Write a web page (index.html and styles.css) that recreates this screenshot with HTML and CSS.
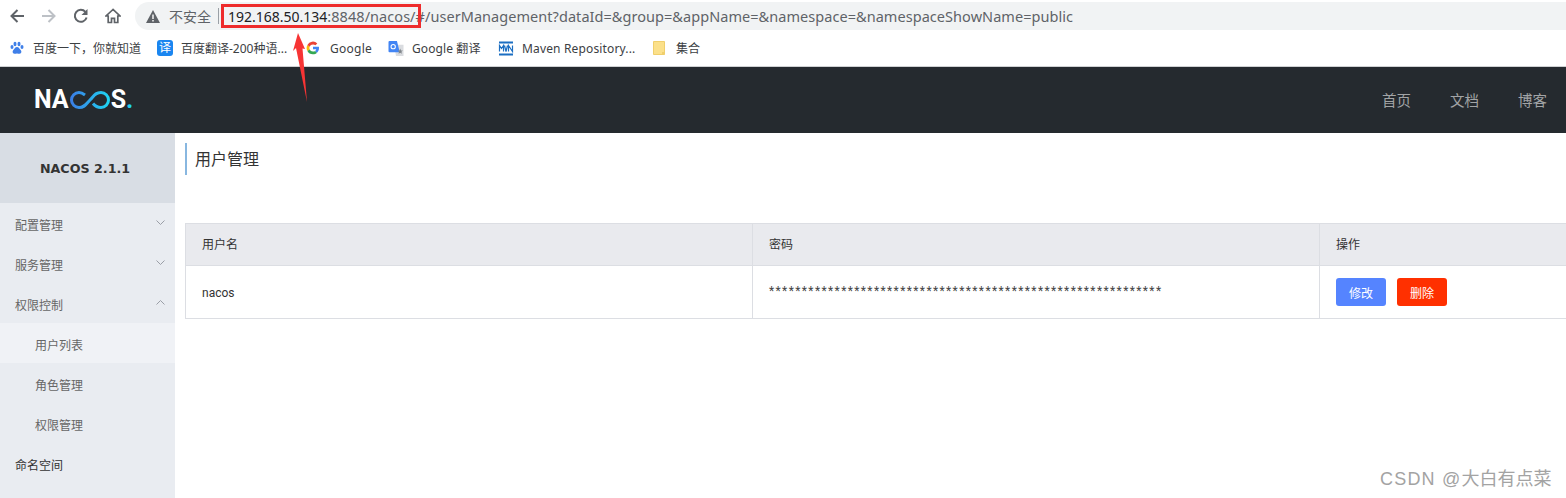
FILE: index.html
```html
<!DOCTYPE html>
<html lang="zh-CN">
<head>
<meta charset="utf-8">
<title>Nacos</title>
<link rel="stylesheet" href="styles.css">
</head>
<body>
<div class="page">
  <div class="toolbar">
    <div class="navs">
      <svg class="nav-icon" viewBox="0 0 16 16"><path d="M15 8H2.500M8.500 2L2.500 8l6 6" class="stroke dark"/></svg>
      <svg class="nav-icon" viewBox="0 0 16 16"><path d="M1 8h12.500M7.500 2l6 6-6 6" class="stroke light"/></svg>
      <svg class="nav-icon" viewBox="0 0 16 16"><path d="M13.600 9.500A6 6 0 1 1 12.400 3.900" class="stroke dark"/><path d="M14.500 1v6h-6z" class="fill-dark"/></svg>
      <svg class="nav-icon" viewBox="0 0 16 16"><path d="M8 1.500L1 8h2.200v6.500h3.300v-4.200h3v4.200h3.300V8H15z" class="stroke dark thin"/></svg>
    </div>
    <div class="address">
      <svg class="warn" viewBox="0 0 14 13"><path d="M7 0l7 13H0z" class="fill-dark"/><path d="M6.300 4.500h1.400v4.500H6.300zM6.300 10h1.400v1.500H6.300z" class="fill-white"/></svg>
      <span class="insecure">不安全</span>
      <span class="divider"></span>
      <span class="url"><span class="host">192.168.50.134</span><span class="port">:8848/nacos/#/userManagement?dataId=&amp;group=&amp;appName=&amp;namespace=&amp;namespaceShowName=public</span></span>
    </div>
  </div>
  <div class="bookmarks">
    <div class="bm bm-baidu">
      <svg class="bm-icon" viewBox="0 0 14 14"><ellipse cx="2" cy="6" rx="1.500" ry="2" class="fill-blue"/><ellipse cx="5" cy="3" rx="1.500" ry="2.200" class="fill-blue"/><ellipse cx="9" cy="3" rx="1.500" ry="2.200" class="fill-blue"/><ellipse cx="12" cy="6" rx="1.500" ry="2" class="fill-blue"/><path d="M7 6c2 0 2.500 2 4 3.500 1 1.500 0 3.500-2 3.300-1-.1-1.300-.4-2-.4s-1 .3-2 .4C3 13 2 11 3 9.500 4.500 8 5 6 7 6z" class="fill-blue"/></svg>
      <span>百度一下，你就知道</span>
    </div>
    <div class="bm bm-fanyi">
      <span class="fanyi-icon">译</span>
      <span>百度翻译-200种语...</span>
    </div>
    <div class="bm bm-google">
      <svg class="bm-icon" viewBox="0 0 14 14"><path d="M7 10.600a3.600 3.600 0 0 1-3.400-2.400L1.400 10A6.200 6.200 0 0 0 7 13.300c1.600 0 3-.5 4-1.500L9.100 10c-.5.400-1.200.6-2.100.6z" fill="#34a853"/><path d="M3.600 8.200a3.700 3.700 0 0 1 0-2.400L1.400 4a6.300 6.300 0 0 0 0 6z" fill="#fbbc05"/><path d="M7 3.400c1 0 1.800.3 2.400.9l1.900-1.900A6.200 6.200 0 0 0 1.400 4l2.200 1.800A3.600 3.600 0 0 1 7 3.400z" fill="#ea4335"/><path d="M13 7c0-.4 0-.8-.2-1.200H7v2.500h3.300c-.2.700-.6 1.300-1.200 1.700l1.900 1.800C12.200 10.700 13 9 13 7z" fill="#4285f4"/></svg>
      <span>Google</span>
    </div>
    <div class="bm bm-translate">
      <svg class="bm-icon wide" viewBox="0 0 16 16"><path d="M6 4h10v12H8z" fill="#dadce0"/><path d="M1 0h8l3 12H1a1 1 0 0 1-1-1V1a1 1 0 0 1 1-1z" fill="#4285f4"/><circle cx="5" cy="6" r="2.300" fill="none" stroke="#fff" stroke-width="1.100"/><path d="M12.500 8l.8 2 2 .2-1.500 1.300.5 2-1.800-1-1.800 1 .5-2-1.500-1.300 2-.2z" fill="#80868b"/></svg>
      <span>Google 翻译</span>
    </div>
    <div class="bm bm-maven">
      <svg class="bm-icon wide" viewBox="0 0 16 14"><path d="M1 0h14v2H1zM1 12h14v2H1z" fill="#1b6ec2"/><path d="M1.500 10V4l2 3 2-3v6M6.500 4l1.500 6 1.500-6M10.500 10V4l4 6V4" fill="none" stroke="#1b6ec2" stroke-width="1.200"/></svg>
      <span>Maven Repository...</span>
    </div>
    <div class="bm bm-folder">
      <svg class="folder" viewBox="0 0 12 14"><path d="M.5.500h11v13H.5z" fill="#fbe08a" stroke="#f0cf6c"/><path d="M9 11h2.500v2.500H9z" fill="#f0cf6c"/></svg>
      <span>集合</span>
    </div>
  </div>

  <header class="topbar">
    <div class="logo">
      <span>NA</span>
      <svg class="logo-mark" viewBox="0 0 42 18"><defs><linearGradient id="lg" x1="0" x2="1" y1="0" y2="0"><stop offset="0" stop-color="#3a7fe6"/><stop offset="1" stop-color="#1fd3f2"/></linearGradient></defs><path d="M16 4C14 2.500 12 1.500 10 1.500a7.500 7.500 0 0 0 0 15C16 16.500 17 13 21 9S26 1.500 32 1.500a7.500 7.500 0 0 1 0 15c-4 0-6-1.500-8-4" fill="none" stroke="url(#lg)" stroke-width="3"/></svg>
      <span>S</span><span class="logo-dot">.</span>
    </div>
    <nav class="topnav">
      <span>首页</span>
      <span>文档</span>
      <span>博客</span>
    </nav>
  </header>

  <div class="content">
    <aside class="sidebar">
      <div class="brand">NACOS 2.1.1</div>
      <div class="item item-parent"><span>配置管理</span><svg class="chev" viewBox="0 0 9 5"><path d="M.5.500l4 4 4-4"/></svg></div>
      <div class="item item-parent"><span>服务管理</span><svg class="chev" viewBox="0 0 9 5"><path d="M.5.500l4 4 4-4"/></svg></div>
      <div class="item item-parent"><span>权限控制</span><svg class="chev" viewBox="0 0 9 5"><path d="M.5 4.500l4-4 4 4"/></svg></div>
      <div class="item item-child active"><span>用户列表</span></div>
      <div class="item item-child"><span>角色管理</span></div>
      <div class="item item-child"><span>权限管理</span></div>
      <div class="item item-leaf"><span>命名空间</span></div>
    </aside>
    <main class="main">
      <h1 class="title">用户管理</h1>
      <table class="users">
        <colgroup><col class="col-a"><col class="col-b"><col class="col-c"></colgroup>
        <thead>
          <tr><th>用户名</th><th>密码</th><th>操作</th></tr>
        </thead>
        <tbody>
          <tr>
            <td class="name">nacos</td>
            <td class="pw">************************************************************</td>
            <td class="ops"><button class="btn btn-edit">修改</button><button class="btn btn-del">删除</button></td>
          </tr>
        </tbody>
      </table>
    </main>
  </div>

  <div class="redbox"></div>
  <svg class="arrow" viewBox="0 0 16 70"><path d="M6 0l7 16-2.500-.5L15 69 4 15l-3 3z" fill="#f73434"/></svg>
  <div class="watermark"><span class="wm-latin">CSDN @</span>大白有点菜</div>
</div>
</body>
</html>
```
FILE: styles.css
```css
* { box-sizing: border-box; }
html, body { margin: 0; padding: 0; background: #fff; }
body { font-family: "Noto Sans", "Noto Sans CJK SC", sans-serif; }
.page { position: relative; width: 1566px; height: 498px; overflow: hidden; }

.toolbar { display: flex; align-items: flex-start; height: 30px; padding: 0 0 0 9px; }
.navs { display: flex; gap: 16px; padding-top: 8px; width: 126px; flex: none; }
.nav-icon { width: 16px; height: 16px; flex: none; }
.stroke { fill: none; stroke-width: 2; }
.dark { stroke: #5f6368; }
.light { stroke: #bdc1c6; }
.thin { stroke-width: 1.700; }
.fill-dark { fill: #5f6368; }
.fill-white { fill: #fff; }
.fill-blue { fill: #3f7fe8; }

.address { flex: 1; display: flex; align-items: center; height: 28px; margin-top: 2px; padding-left: 11px; background: #f1f3f4; border-radius: 14px 0 0 14px; font-size: 14px; }
.warn { width: 14px; height: 13px; flex: none; }
.insecure { margin-left: 9px; color: #5f6368; font-size: 14px; }
.divider { width: 1px; height: 16px; background: #9aa0a6; margin: 0 9px 0 7px; }
.url { white-space: nowrap; font-size: 14.500px; }
.host { color: #202124; font-size: 14px; }
.port { color: #5f6368; letter-spacing: .05px; }

.bookmarks { display: flex; align-items: center; height: 37px; padding-left: 10px; border-bottom: 1px solid #cfd1d3; font-size: 12px; color: #3c4043; }
.bm { display: flex; align-items: center; gap: 9px; flex: none; white-space: nowrap; }
.bm-baidu { width: 147px; }
.bm-fanyi { width: 149px; gap: 8px; }
.bm-google { width: 82px; gap: 10px; letter-spacing: .25px; }
.bm-translate { width: 110px; gap: 8px; letter-spacing: .1px; }
.bm-maven { width: 154px; gap: 8px; letter-spacing: .15px; }
.bm-icon { width: 14px; height: 14px; flex: none; }
.bm-icon.wide { width: 16px; height: 15px; }
.fanyi-icon { width: 16px; height: 16px; border-radius: 3px; background: #1a86f0; color: #fff; font-size: 12px; line-height: 16px; text-align: center; flex: none; }
.folder { width: 12px; height: 14px; flex: none; margin-right: 2px; margin-left: 1px; }

.topbar { display: flex; align-items: center; justify-content: space-between; height: 66px; background: #252a2f; }
.logo { display: flex; align-items: center; margin-left: 34px; height: 20px; font-family: "Roboto", sans-serif; font-size: 25px; font-weight: 700; color: #fff; line-height: 20px; }
.logo-mark { width: 42px; height: 18px; flex: none; }
.logo-dot { color: #22d3ee; }
.topnav { display: flex; gap: 39px; margin-right: 19px; padding-bottom: 2px; font-size: 14.500px; color: #a2a4a6; }
.topnav span { white-space: nowrap; }

.content { display: flex; height: 365px; }
.sidebar { flex: none; width: 175px; background: #e9ecf1; font-size: 12px; color: #666; }
.brand { display: flex; align-items: center; justify-content: center; height: 70px; padding-right: 5px; background: #d8dde4; font-family: "DejaVu Sans", sans-serif; font-size: 12.700px; font-weight: 700; color: #333; }
.item { display: flex; justify-content: space-between; height: 40px; padding: 6px 10px 0 15px; line-height: 34px; }
.item-child { padding-left: 35px; }
.active { background: #f0f2f6; }
.item-leaf { color: #333; }
.chev { width: 9px; height: 5px; margin-top: 11px; fill: none; stroke: #9a9ea6; stroke-width: 1; flex: none; }

.main { flex: 1; min-width: 0; padding: 10px 0 0 10px; }
.title { margin: 0 0 48px; height: 32px; padding-left: 8px; border-left: 2px solid #88b7e0; font-size: 16px; font-weight: 400; line-height: 32px; color: #333; }
.users { width: 1420px; table-layout: fixed; border-collapse: collapse; font-family: "Roboto", "Noto Sans CJK SC", sans-serif; font-size: 12px; color: #333; }
.col-a, .col-b { width: 567px; }
.users th, .users td { border: 1px solid #dcdee3; padding: 0 16px; text-align: left; font-weight: 400; }
.users th { height: 42px; padding-bottom: 2px; background: #e9eaee; }
.users td { height: 53px; }
.users .name { padding-top: 2px; }
.users .pw { padding-bottom: 3px; letter-spacing: 1.390px; color: #444; }
.ops { white-space: nowrap; }
.btn { width: 50px; height: 28px; padding: 0; border: 0; border-radius: 3px; color: #fff; font-family: inherit; font-size: 12px; vertical-align: middle; }
.btn-edit { background: #5584ff; }
.btn-del { background: #ff3000; margin-left: 11px; }

.redbox { position: absolute; left: 221px; top: 4px; width: 200px; height: 24px; border: 3px solid #ee2c2c; }
.arrow { position: absolute; left: 292px; top: 33px; width: 16px; height: 70px; overflow: visible; }
.watermark { position: absolute; left: 1380px; top: 464px; font-size: 18px; color: #a3a3a3; white-space: nowrap; }
.wm-latin { font-family: "Liberation Sans", sans-serif; letter-spacing: 1.200px; }
```
